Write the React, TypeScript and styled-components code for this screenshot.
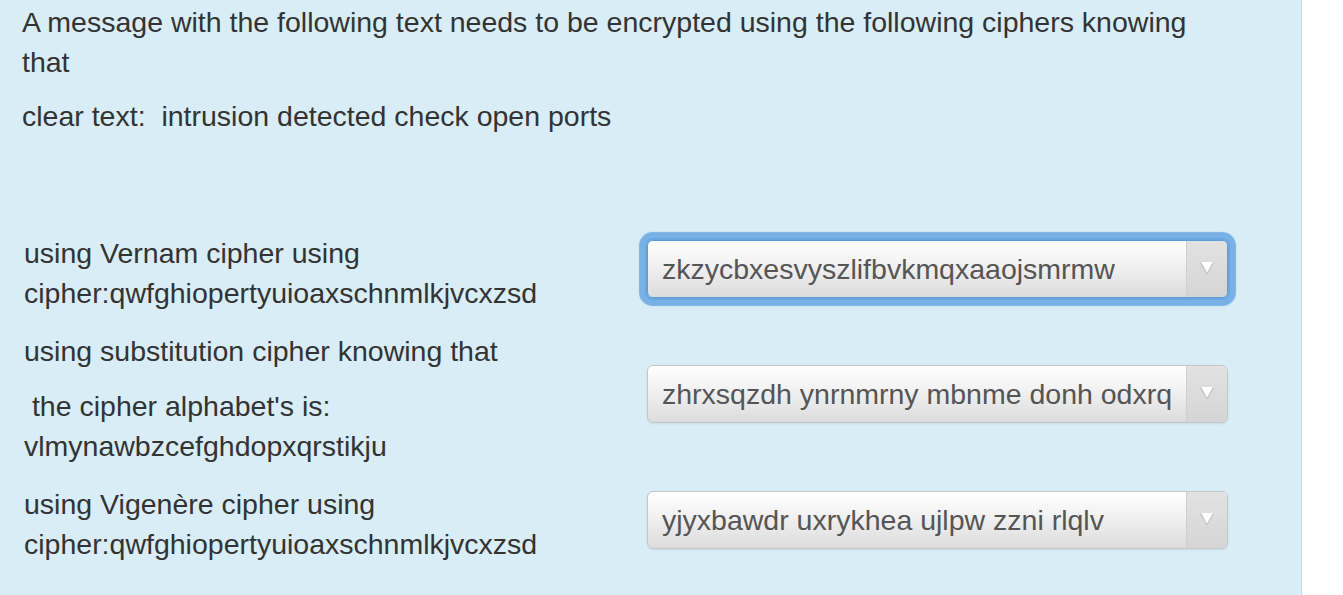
import styled, { createGlobalStyle, css } from "styled-components";

const GlobalStyle = createGlobalStyle`
  html, body {
    margin: 0;
    padding: 0;
    background: #ffffff;
  }
  body {
    font-family: "Liberation Sans", Arial, Helvetica, sans-serif;
    color: #333333;
  }
`;

const rows = [
  {
    label: [["using Vernam cipher using", "cipher:qwfghiopertyuioaxschnmlkjvcxzsd"]],
    value: "zkzycbxesvyszlifbvkmqxaaojsmrmw",
    focused: true,
  },
  {
    label: [
      ["using substitution cipher knowing that"],
      ["\u00a0the cipher alphabet's is:", "vlmynawbzcefghdopxqrstikju"],
    ],
    value: "zhrxsqzdh ynrnmrny mbnme donh odxrq",
    focused: false,
  },
  {
    label: [["using Vigenère cipher using", "cipher:qwfghiopertyuioaxschnmlkjvcxzsd"]],
    value: "yjyxbawdr uxrykhea ujlpw zzni rlqlv",
    focused: false,
  },
];

function Arrow() {
  return (
    <svg width="16" height="14" viewBox="0 0 16 14">
      <polygon points="1,1.5 15,1.5 8,13.5" fill="#bcbcbc" />
      <polygon points="2,1 14,1 8,11.8" fill="#ffffff" />
    </svg>
  );
}

function App() {
  return (
    <>
      <GlobalStyle />
      <Panel>
        <Intro>
          A message with the following text needs to be encrypted using the
          following ciphers knowing that
        </Intro>
        <Intro>clear text:&nbsp; intrusion detected check open ports</Intro>

        <Questions>
          {rows.map((row, i) => (
            <Row key={i}>
              <Label>
                {row.label.map((para, j) => (
                  <LabelPara key={j}>
                    {para.map((line, k) => (
                      <span key={k}>
                        {line}
                        {k < para.length - 1 && <br />}
                      </span>
                    ))}
                  </LabelPara>
                ))}
              </Label>
              <SelectWrap $focused={row.focused}>
                <Select defaultValue={row.value}>
                  <option value={row.value}>{row.value}</option>
                </Select>
                <ArrowCell>
                  <Arrow />
                </ArrowCell>
              </SelectWrap>
            </Row>
          ))}
        </Questions>
      </Panel>
    </>
  );
}

const Panel = styled.div`
  box-sizing: border-box;
  width: 1302px;
  min-height: 595px;
  padding: 2px 0 0 22px;
  background: #d9edf6;
  border-right: 1px solid #c4dfe9;
`;

const Intro = styled.p`
  margin: 0 0 14px;
  max-width: 1200px;
  font-size: 28.5px;
  line-height: 40px;
  color: #333333;
`;

const Questions = styled.div`
  display: flex;
  flex-direction: column;
  gap: 18px;
  margin-top: 97px;
`;

const Row = styled.div`
  display: grid;
  grid-template-columns: 625px 581px;
  align-items: center;
`;

const Label = styled.div`
  display: flex;
  flex-direction: column;
  gap: 15px;
  padding-left: 2px;
  font-size: 28.5px;
  line-height: 40px;
  color: #333333;
`;

const LabelPara = styled.div``;

const SelectWrap = styled.div<{ $focused: boolean }>`
  display: flex;
  box-sizing: border-box;
  height: 58px;
  margin-bottom: 9px;
  border: 1px solid #c6c6c6;
  border-radius: 6px;
  background: linear-gradient(#ffffff 0%, #f4f4f4 35%, #dcdcdc 100%);
  box-shadow: 0 1px 2px rgba(0, 0, 0, 0.08);
  overflow: hidden;

  ${(p) =>
    p.$focused &&
    css`
      overflow: visible;
      border-color: #5c9cd9;
      box-shadow: 0 0 0 2px #6aa6e0, 0 0 1px 8px #78b1e6;
    `}
`;

const Select = styled.select`
  flex: 1;
  min-width: 0;
  appearance: none;
  -webkit-appearance: none;
  border: none;
  outline: none;
  background: transparent;
  padding: 0 0 0 14px;
  font-family: "Liberation Sans", Arial, Helvetica, sans-serif;
  font-size: 28.5px;
  color: #555555;
  cursor: pointer;
`;

const ArrowCell = styled.div`
  width: 41px;
  flex: none;
  display: flex;
  align-items: center;
  justify-content: center;
  padding-bottom: 2px;
  box-sizing: border-box;
  border-left: 1px solid #cfcfcf;
  border-radius: 0 5px 5px 0;
  background: linear-gradient(#e2e2e2, #d5d5d5);
`;

export default App;
